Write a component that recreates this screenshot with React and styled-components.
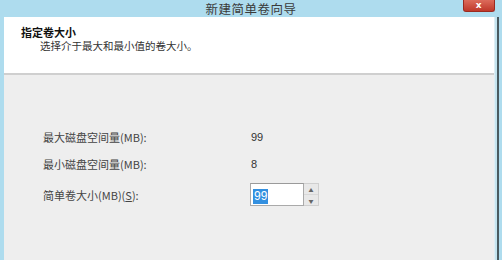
import React from 'react';
import styled, { createGlobalStyle } from 'styled-components';

const Global = createGlobalStyle`
  html, body { margin: 0; padding: 0; background: #eeeeee; }
  body { font-family: "Noto Sans CJK SC", "Liberation Sans", sans-serif; }
`;

const Window = styled.div`
  width: 502px;
  height: 260px;
  display: flex;
  flex-direction: column;
  background: #aedcee;
  overflow: hidden;
`;

const TitleBar = styled.div`
  height: 17px;
  flex: none;
  display: flex;
  align-items: center;
  justify-content: center;
  position: relative;
  font-size: 12.5px;
  color: #3a3a3a;
  letter-spacing: 0.5px;
`;

const CloseBtn = styled.div`
  position: absolute;
  right: 7px;
  top: 0;
  width: 30px;
  height: 11px;
  background: linear-gradient(#dc6b5b, #bf382a);
  border: 1px solid #9a2a20;
  border-top: none;
  border-radius: 0 0 3px 3px;
  color: #fff;
  font-size: 9px;
  line-height: 10px;
  text-align: center;
  font-family: "DejaVu Sans", sans-serif;
  font-weight: bold;
`;

const Frame = styled.div`
  flex: 1;
  display: flex;
  flex-direction: column;
  margin: 0 7px 0 4px;
  border-right: 1px solid #dfeef4;
  box-shadow: 2px 0 0 #c4e4ef, 4px 0 0 #4a5a60;
`;

const Header = styled.div`
  height: 58px;
  flex: none;
  background: #ffffff;
  border-bottom: 2px solid #cfcfcf;
  padding: 9px 0 0 17px;
  box-sizing: border-box;
`;

const HeadTitle = styled.div`
  font-size: 11px;
  font-weight: bold;
  color: #111;
  line-height: 13px;
`;

const HeadSub = styled.div`
  font-size: 10.5px;
  color: #333;
  line-height: 13px;
  padding-left: 19px;
`;

const Body = styled.div`
  flex: 1;
  background: #eeeeee;
  padding: 54px 0 0 39px;
  display: flex;
  flex-direction: column;
  gap: 11px;
`;

const Row = styled.div`
  display: grid;
  grid-template-columns: 208px auto;
  align-items: center;
  height: ${p => p.$h || 16}px;
  font-size: 11px;
  color: #444;
`;

const Value = styled.div`
  font-family: "Liberation Sans", sans-serif;
  font-size: 11px;
  color: #333;
`;

const Spin = styled.div`
  display: flex;
  height: 23px;
  margin-left: -1px;
`;

const Input = styled.div`
  width: 54px;
  height: 23px;
  box-sizing: border-box;
  background: #fff;
  border: 1px solid #aaaaaa;
  border-top-color: #9a9a9a;
  padding: 3px 0 0 2px;
`;

const Sel = styled.span`
  background: #3390e0;
  color: #fff;
  font-family: "Liberation Sans", sans-serif;
  font-size: 12px;
  line-height: 15px;
  display: inline-block;
  padding: 0 1px;
`;

const Arrows = styled.div`
  width: 15px;
  display: flex;
  flex-direction: column;
  background: #e8e8e8;
  border: 1px solid #cfcfcf;
  border-left: none;
  box-sizing: border-box;
`;

const Arrow = styled.div`
  flex: 1;
  display: flex;
  align-items: center;
  justify-content: center;
  font-size: 5px;
  color: #666;
  & + & { border-top: 1px solid #d8d8d8; }
`;

const U = styled.span`text-decoration: underline;`;

export default function App() {
  return (
    <>
      <Global />
      <Window>
        <TitleBar>
          新建简单卷向导
          <CloseBtn>x</CloseBtn>
        </TitleBar>
        <Frame>
          <Header>
            <HeadTitle>指定卷大小</HeadTitle>
            <HeadSub>选择介于最大和最小值的卷大小。</HeadSub>
          </Header>
          <Body>
            <Row>
              <span>最大磁盘空间量(MB):</span>
              <Value>99</Value>
            </Row>
            <Row>
              <span>最小磁盘空间量(MB):</span>
              <Value>8</Value>
            </Row>
            <Row $h={23}>
              <span>简单卷大小(MB)(<U>S</U>):</span>
              <Spin>
                <Input><Sel>99</Sel></Input>
                <Arrows>
                  <Arrow>▲</Arrow>
                  <Arrow>▼</Arrow>
                </Arrows>
              </Spin>
            </Row>
          </Body>
        </Frame>
      </Window>
    </>
  );
}
